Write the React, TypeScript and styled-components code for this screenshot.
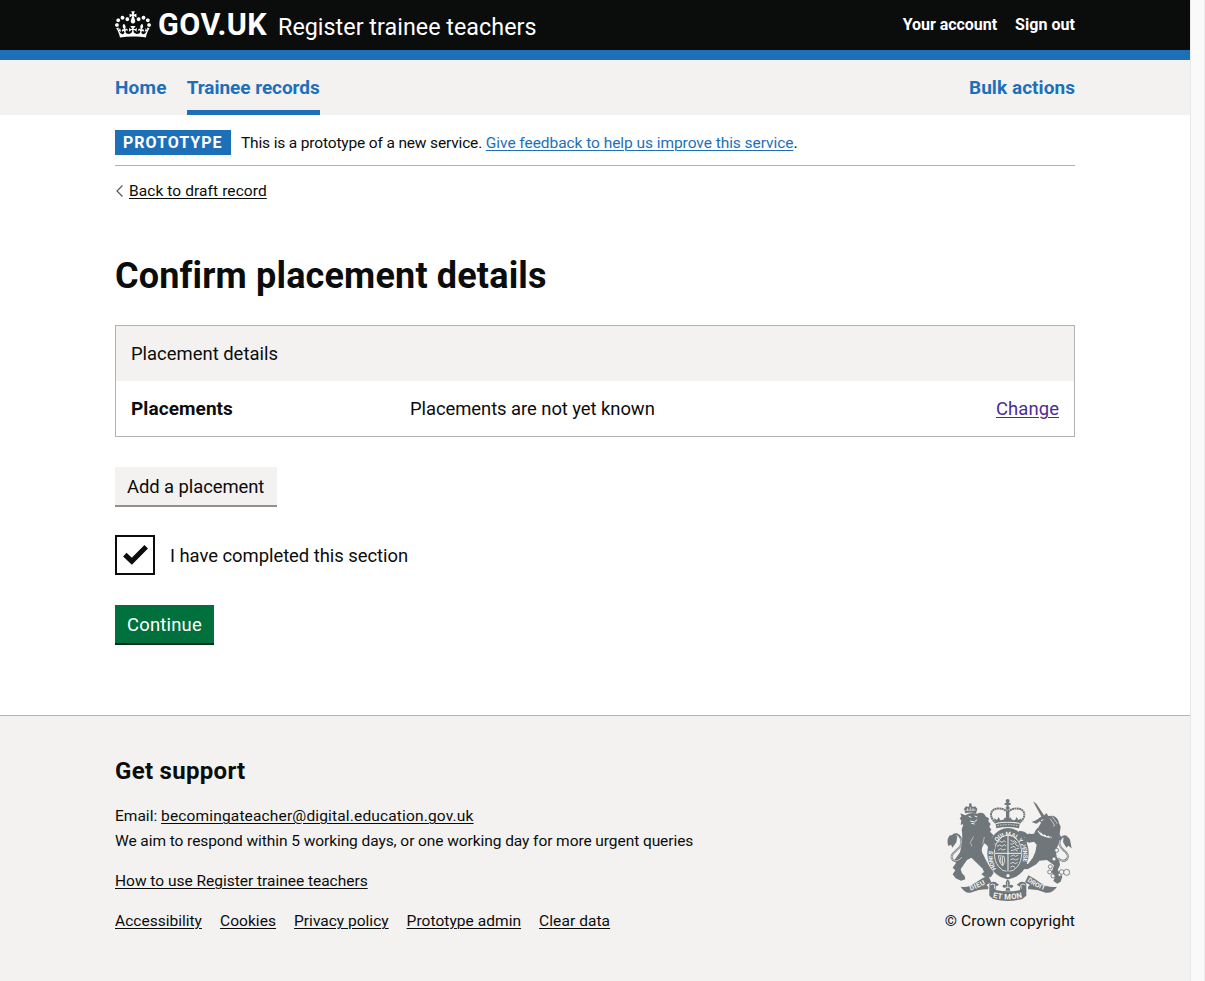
import React from 'react';
import styled, { createGlobalStyle, css } from 'styled-components';

const colours = {
  black: '#0b0c0c',
  white: '#ffffff',
  blue: '#1d70b8',
  lightGrey: '#f3f2f1',
  borderGrey: '#b1b4b6',
  midGrey: '#929191',
  darkGrey: '#505a5f',
  green: '#00703c',
  greenShadow: '#002d18',
  visited: '#4c2c92',
  arms: '#6f777b',
};

const GlobalStyle = createGlobalStyle`
  *, *::before, *::after { box-sizing: border-box; }
  body {
    margin: 0;
    background: ${colours.white};
    color: ${colours.black};
    font-family: Roboto, Arial, sans-serif;
    font-size: 16px;
    line-height: 25px;
    overflow: hidden;
  }
`;

const Window = styled.div`
  display: flex;
  height: 981px;
`;

const Page = styled.div`
  display: flex;
  flex-direction: column;
  width: 1190px;
`;

const ScrollTrack = styled.div`
  width: 15px;
  background: #fafafa;
  border-left: 1px solid #e8e8e8;
  border-right: 1px solid #ececec;
`;

const Container = styled.div`
  width: 960px;
  margin: 0 auto;
`;

const tracked = css<{ $track?: number }>`
  font-size: 0.97em;
  line-height: 1;
  letter-spacing: ${(p) => p.$track ?? 0}px;
  white-space: pre;
`;

const Tracked = styled.span<{ $track?: number }>`
  ${tracked}
`;

const Link = styled.a<{ $track?: number; $colour?: string }>`
  ${tracked}
  color: ${(p) => p.$colour ?? colours.black};
  text-decoration: underline;
  text-decoration-thickness: 1px;
  text-underline-offset: 1.5px;
`;

const Header = styled.header`
  height: 60px;
  background: ${colours.black};
  border-bottom: 10px solid ${colours.blue};
  color: ${colours.white};
`;

const HeaderRow = styled(Container)`
  display: flex;
  align-items: flex-start;
`;

const Crown = styled.svg`
  flex: none;
  width: 36px;
  height: 27px;
  margin-top: 11px;
`;

const Logotype = styled.span`
  margin-left: 7px;
  width: 113px;
  padding-top: 5px;
  font-size: 30.5px;
  line-height: 40px;
  font-weight: 700;
  letter-spacing: 0.45px;
`;

const ServiceName = styled.span`
  margin-left: 7px;
  padding-top: 7px;
  font-size: 24px;
  line-height: 40px;
`;

const HeaderLinks = styled.nav`
  display: flex;
  gap: 18px;
  margin-left: auto;
  padding-top: 12px;
`;

const HeaderLink = styled.a<{ $track: number }>`
  font-weight: 700;
  letter-spacing: ${(p) => p.$track}px;
`;

const PrimaryNav = styled.nav`
  height: 55px;
  background: ${colours.lightGrey};
`;

const NavRow = styled(Container)`
  display: flex;
  gap: 20px;
`;

const NavItem = styled.a<{ $current?: boolean; $end?: boolean; $track: number }>`
  height: 55px;
  color: ${colours.blue};
  font-size: 19px;
  line-height: 55px;
  font-weight: 700;
  letter-spacing: ${(p) => p.$track}px;
  box-shadow: ${(p) => (p.$current ? `inset 0 -5px ${colours.blue}` : 'none')};
  margin-left: ${(p) => (p.$end ? 'auto' : '0')};
`;

const PhaseBanner = styled.div`
  display: flex;
  gap: 10px;
  padding: 15px 0 10px;
  border-bottom: 1px solid ${colours.borderGrey};
`;

const Tag = styled.strong`
  width: 116px;
  padding-left: 8px;
  background: ${colours.blue};
  color: ${colours.white};
  font-weight: 700;
  letter-spacing: 1px;
`;

const BackLink = styled.div`
  display: flex;
  align-items: center;
  margin-top: 12px;
`;

const BackArrow = styled.svg`
  width: 14px;
  height: 13px;
`;

const Title = styled.h1`
  margin: 53px 0 29px;
  font-size: 36px;
  line-height: 40px;
  font-weight: 700;
  letter-spacing: 0.16px;
`;

const SummaryCard = styled.section`
  border: 1px solid ${colours.borderGrey};
  font-size: 19px;
  line-height: 55px;
`;

const CardHeading = styled.div`
  padding: 0 15px;
  background: ${colours.lightGrey};
`;

const SummaryRow = styled.div`
  display: grid;
  grid-template-columns: 279px 1fr auto;
  padding: 0 15px;
`;

const Key = styled.div`
  font-weight: 700;
  letter-spacing: 0.08px;
`;

const Button = styled.button<{ $primary?: boolean; $width: number }>`
  display: block;
  width: ${(p) => p.$width}px;
  height: 38px;
  padding: 1px 0 0 12px;
  border: 0;
  background: ${(p) => (p.$primary ? colours.green : colours.lightGrey)};
  box-shadow: 0 2px 0 ${(p) => (p.$primary ? colours.greenShadow : colours.midGrey)};
  color: ${(p) => (p.$primary ? colours.white : colours.black)};
  font-family: inherit;
  font-size: 19px;
  line-height: 37px;
  text-align: left;
  white-space: nowrap;
`;

const FormStack = styled.form`
  display: flex;
  flex-direction: column;
  gap: 30px;
  margin-top: 30px;
`;

const CheckboxRow = styled.label`
  display: flex;
  gap: 15px;
  height: 40px;
`;

const CheckboxBox = styled.span`
  width: 40px;
  height: 40px;
  border: 2px solid ${colours.black};
`;

const CheckboxText = styled.span`
  font-size: 19px;
  line-height: 42px;
`;

const Tick = styled.svg`
  display: block;
  width: 36px;
  height: 36px;
`;

const Footer = styled.footer`
  flex: 1;
  margin-top: 72px;
  padding-top: 40px;
  background: ${colours.lightGrey};
  border-top: 1px solid ${colours.borderGrey};
`;

const FooterRow = styled(Container)`
  display: flex;
  justify-content: space-between;
  align-items: flex-end;
`;

const SupportHeading = styled.h2`
  margin: 0 0 17px;
  font-size: 24px;
  line-height: 30px;
  font-weight: 700;
  letter-spacing: 0.3px;
`;

const Paragraph = styled.p`
  margin: 0 0 15px;
`;

const FooterLinks = styled.ul`
  display: flex;
  gap: 18px;
  margin: 0;
  padding: 0;
  list-style: none;
`;

const Copyright = styled.div`
  display: flex;
  flex-direction: column;
  align-items: flex-end;
`;

const Arms = styled.svg`
  width: 125px;
  height: 102px;
  margin: 0 3px 7px 0;
`;

const ScrollText = styled.text`
  fill: ${colours.lightGrey};
  font-weight: 700;
`;

function CoatOfArms() {
  return (
    <Arms viewBox="36 27 375 306" fill={colours.arms}>
      {/* imperial crown */}
      <circle cx="218" cy="33" r="6" />
      <path d="M215 36h6v12h-6zM209 39h18v6h-18z" />
      <circle cx="218" cy="54" r="6" />
      <path d="M183 99c-16-12-20-30-8-39 14-9 32-4 43 6 11-10 29-15 43-6 12 9 8 27-8 39" fill="none" stroke={colours.arms} strokeWidth="6" strokeDasharray="6 1.2" />
      <path d="M213 62h10v32h-10z" />
      <path d="M180 99l-3-14 9 5 5-9 5 10 9-2 5-7 8 9 8-9 5 7 9 2 5-10 5 9 9-5-3 14q-35-8-76 0z" />
      <path d="M182 102q36-8 72 0l-2 13q-34-8-68 0z" />
      <path d="M187 107q31-6 62 0" fill="none" stroke={colours.lightGrey} strokeWidth="2" strokeDasharray="5 3" />

      {/* garter and shield */}
      <ellipse cx="219" cy="190" rx="62" ry="76" />
      <ellipse cx="219" cy="190" rx="41" ry="55" fill="none" stroke={colours.lightGrey} strokeWidth="2.5" />
      <path d="M219 136v108M180 190h78" stroke={colours.lightGrey} strokeWidth="3" />
      <g fill="none" stroke={colours.lightGrey} strokeWidth="2.4">
        <path d="M187 158l7-5 7 4 6-5 5 4M186 169l8-4 7 4 7-5 6 4M190 180l7-4 6 4 9-3" />
        <path d="M226 150l8 5 5-3 7 8M226 162h8l5-5 5 9 8 3M227 173l10-4 7 8 9-3M228 182l12-3 8 4" />
        <path d="M190 197l17 2q7 14-4 29-12-10-13-31zM196 201l2 18M202 201l1 24" />
        <path d="M227 199l8-4 7 4 8-4M226 210l8-4 8 4 9-4M226 221l8-4 7 4 7-4M226 232l7-4 7 4" />
      </g>
      <path id="garterArc" d="M184 237a46 60 0 1 1 70 0" fill="none" />
      <ScrollText fontSize="18" letterSpacing="-0.6">
        <textPath href="#garterArc">HONI SOIT QUI MAL Y PENSE</textPath>
      </ScrollText>
      <circle cx="219" cy="256" r="12" />
      <circle cx="219" cy="257" r="5" fill={colours.lightGrey} />

      {/* lion */}
      <path d="M91 70l-4-14 6-7 7 2 6-8 7 8 7-2 7 7-4 15q-16-6-32-1z" />
      <circle cx="106" cy="44" r="4" />
      <path d="M92 61l30-1M98 54v9M106 51v10M114 54v9" stroke={colours.lightGrey} strokeWidth="2" />
      <path d="M91 76q16-11 35-5 12-6 21 0l6 9 9 5-2 9 7 8-4 8 6 9-4 6 10 10-5 10 8 12 3 15-6 14-12-6-7-14-8-6-5 9q-7 13 2 25l8 17q9 17 16 28l7 10-9 13-18-2-10-8 8-6-4-10-20-19-14-14-13 7-12 17-7 11 4 12 8 8 2 10-13 4-16-7-9-12 8-12-8-8 10-14-5-8 17-24 4-19q5-31 1-49l5-16-8 1 2-13-5-5 5-7-3-9z" />
      <path d="M101 79l8 3M119 78l8 3M106 93l12 3 8-7M109 100l10 2" fill="none" stroke={colours.lightGrey} strokeWidth="3" />
      <path d="M116 139l-10 18 5 12M148 141l-5 22" fill="none" stroke={colours.lightGrey} strokeWidth="1.5" />
      <path d="M81 202q-17 17-28 7-10-11 9-26 24-18 15-39-9-17-23-9" fill="none" stroke={colours.arms} strokeWidth="6" />
      <path d="M81 202q-17 17-28 7-10-11 9-26 24-18 15-39" fill="none" stroke={colours.lightGrey} strokeWidth="1.8" />
      <path d="M59 133l-16 4q-9 13-3 31l8-4 4 9 12-16 3-18z" />
      <path d="M145 237l20-3 10 10-12 6-15-4z" />

      {/* unicorn */}
      <path d="M294 34l10 7 28 42-9 4z" />
      <path d="M303 91l14-10 9-3 8-9 6 9 14-1q17 7 18 23l5 10-3 21 5 13-7 15-9 20q-1 24 10 33l2 13-7 15 14 20-5 15-10 6-12-8 5-12-10-15 7-20-21-16-23 2-9 11-25 14-18 1-8-7 9-10 17 1 14-18 8-18 4-22-8-9-15 3-13-6 1-11-13-3-8-10 5-6 14 3 10 8 19-2 5-10 9-10 7-13-3-4-11 7-14-5z" />
      <path d="M318 92l7-3" stroke={colours.lightGrey} strokeWidth="3" />
      <path d="M345 85l14 21-5 3M351 79l16 22" fill="none" stroke={colours.lightGrey} strokeWidth="2" />
      <path d="M310 122l9 11 15 6 16 3" fill="none" stroke={colours.lightGrey} strokeWidth="6" />
      <path d="M310 119l5 8 6-4 3 10 8-4 3 9 8-5 2 9 8-5" fill="none" stroke={colours.arms} strokeWidth="3" />
      <path d="M368 205q18 14 28 2 9-11-10-26-18-16-11-31 7-16 21-9" fill="none" stroke={colours.arms} strokeWidth="6" />
      <path d="M368 205q18 14 28 2 9-11-10-26-18-16-11-31" fill="none" stroke={colours.lightGrey} strokeWidth="1.8" />
      <path d="M386 140q13-3 19 9l5 26-10-8-6 6-10-17z" />
      <path d="M272 130l-6 13 7 14-6 6-9-8M281 132l17 8" fill="none" stroke={colours.arms} strokeWidth="5" />
      <g fill={colours.lightGrey} stroke={colours.arms} strokeWidth="2.6">
        <circle cx="365" cy="181" r="6" />
        <circle cx="357" cy="207" r="6" />
        <circle cx="346" cy="230" r="6" />
        <circle cx="344" cy="246" r="6" />
        <circle cx="354" cy="258" r="6" />
        <circle cx="374" cy="254" r="5" />
        <circle cx="380" cy="246" r="7" />
        <circle cx="395" cy="247" r="9" />
      </g>

      {/* motto scroll */}
      <path d="M77 290q23 4 42-10 22-15 40-24l10 21-15 8q9 5 5 13-24-1-53 10-16 3-29-18z" />
      <path d="M366 290q-27 4-48-10-20-15-38-24l-10 21 15 8q-9 5-5 13 25-1 52 10 20 3 34-18z" />
      <path d="M163 282q5-9 18-6l11 8-10 6v10q36 8 73 0v-10l-10-6 11-8q13-3 18 6v35l-12 10q-43 12-88 0l-11-10z" />
      <path d="M166 285q7-6 14 0l-2 11M271 285q-7-6-14 0l2 11" fill="none" stroke={colours.lightGrey} strokeWidth="2.5" />
      <path d="M218 268q-9 9-4 18-9-4-12 3 4 8 12 4l-3 9h15l-3-9q8 4 12-4-3-7-12-3 5-9-5-18z" />
      <path d="M218 275v20M209 292h18" stroke={colours.lightGrey} strokeWidth="2" />
      <path id="mottoLeft" d="M107 302q24-7 57-28" fill="none" />
      <path id="mottoMid" d="M171 322q47 13 98-1" fill="none" />
      <path id="mottoRight" d="M276 273q27 22 70 33" fill="none" />
      <ScrollText fontSize="21" letterSpacing="1.2">
        <textPath href="#mottoLeft">DIEU</textPath>
      </ScrollText>
      <ScrollText fontSize="23" letterSpacing="1">
        <textPath href="#mottoMid" startOffset="2">ET MON</textPath>
      </ScrollText>
      <ScrollText fontSize="20" letterSpacing="0.4">
        <textPath href="#mottoRight">DROIT</textPath>
      </ScrollText>
    </Arms>
  );
}

function CrownLogo() {
  return (
    <Crown viewBox="0 0 132 97" fill="currentColor" preserveAspectRatio="xMidYMid meet">
      <path d="M25 30.2c3.5 1.5 7.7-.2 9.1-3.7 1.5-3.6-.2-7.8-3.9-9.2-3.6-1.4-7.6.3-9.1 3.9-1.4 3.5.3 7.5 3.9 9zM9 39.5c3.6 1.5 7.8-.2 9.2-3.7 1.5-3.6-.2-7.8-3.9-9.1-3.6-1.5-7.6.2-9.1 3.8-1.4 3.5.3 7.5 3.8 9zM4.4 57.2c3.5 1.5 7.7-.2 9.1-3.8 1.5-3.6-.2-7.7-3.9-9.1-3.5-1.5-7.6.3-9.1 3.8-1.4 3.5.3 7.6 3.9 9.1zm38.3-21.4c3.5 1.5 7.7-.2 9.1-3.8 1.5-3.6-.2-7.7-3.9-9.1-3.6-1.5-7.6.3-9.1 3.8-1.3 3.6.4 7.7 3.9 9.1zm64.4-5.6c-3.6 1.5-7.8-.2-9.1-3.7-1.5-3.6.2-7.8 3.8-9.2 3.6-1.4 7.7.3 9.2 3.9 1.3 3.5-.4 7.5-3.9 9zm15.9 9.3c-3.6 1.5-7.7-.2-9.1-3.7-1.5-3.6.2-7.8 3.7-9.1 3.6-1.5 7.7.2 9.2 3.8 1.5 3.5-.3 7.5-3.8 9zm4.7 17.7c-3.6 1.5-7.8-.2-9.2-3.8-1.5-3.6.2-7.7 3.9-9.1 3.6-1.5 7.7.3 9.2 3.8 1.3 3.5-.4 7.6-3.9 9.1zM89.3 35.8c-3.6 1.5-7.8-.2-9.2-3.8-1.4-3.6.2-7.7 3.9-9.1 3.6-1.5 7.7.3 9.2 3.8 1.4 3.6-.3 7.7-3.9 9.1zM69.7 17.7l8.9 4.7V9.3l-8.9 2.8c-.2-.3-.5-.6-.9-.9L72.4 0H59.6l3.5 11.2c-.3.3-.6.5-.9.9l-8.8-2.8v13.1l8.8-4.7c.3.3.6.7.9.9l-5 15.4v.1c-.2.8-.4 1.6-.4 2.4 0 4.1 3.1 7.5 7 8.1h.2c.3 0 .7.1 1 .1.4 0 .7 0 1-.1h.2c4-.6 7.1-4.1 7.1-8.1 0-.8-.1-1.7-.4-2.4V34l-5.1-15.4c.4-.2.7-.6 1-.9zM66 92.8c16.9 0 32.8 1.1 47.1 3.2 4-16.9 8.9-26.7 14-33.5l-9.6-3.4c1 4.9 1.1 7.2 0 10.2-1.5-1.4-3-4.3-4.2-8.7L108.6 76c2.8-2 5-3.2 7.5-3.3-4.4 9.4-10 11.9-13.6 11.2-4.3-.8-6.3-4.6-5.6-7.9 1-4.7 5.7-5.9 8-.5 4.3-8.7-3-11.4-7.6-8.8 7.1-7.2 7.9-13.5 2.1-21.1-8 6.1-8.1 12.3-4.5 20.8-4.7-5.4-12.1-2.5-9.5 6.2 3.4-5.2 7.9-2 7.2 3.1-.6 4.3-6.4 7.8-13.5 7.2-10.3-.9-10.9-8-11.2-13.8 2.5-.5 7.1 1.8 11 7.3L80.2 60c-4.1 4.4-8 5.3-12.3 5.4 1.4-4.4 8-11.6 8-11.6H55.5s6.4 7.2 7.9 11.6c-4.2-.1-8-1-12.3-5.4l1.4 16.4c3.9-5.5 8.5-7.7 10.9-7.3-.3 5.8-.9 12.8-11.1 13.8-7.2.6-12.9-2.9-13.5-7.2-.7-5 3.8-8.3 7.1-3.1 2.7-8.7-4.6-11.6-9.4-6.2 3.7-8.5 3.6-14.7-4.6-20.8-5.8 7.6-5 13.9 2.2 21.1-4.7-2.6-11.9.1-7.7 8.8 2.3-5.5 7.1-4.2 8.1.5.7 3.3-1.3 7.1-5.7 7.9-3.5.7-9-1.8-13.5-11.2 2.5.1 4.7 1.3 7.5 3.3l-4.7-15.4c-1.2 4.4-2.7 7.2-4.3 8.7-1.1-3-.9-5.3 0-10.2l-9.5 3.4c5 6.9 9.9 16.7 14 33.5 14.8-2.1 30.8-3.2 47.7-3.2z" />
    </Crown>
  );
}

const footerLinks = [
  { label: 'Accessibility', track: 0.01 },
  { label: 'Cookies', track: 0.06 },
  { label: 'Privacy policy', track: 0 },
  { label: 'Prototype admin', track: 0.04 },
  { label: 'Clear data', track: 0.07 },
];

export default function App() {
  return (
    <Window>
      <GlobalStyle />
      <Page>
        <Header>
          <HeaderRow>
            <CrownLogo />
            <Logotype>GOV.UK</Logotype>
            <ServiceName>
              <Tracked $track={0.04}>Register trainee teachers</Tracked>
            </ServiceName>
            <HeaderLinks>
              <HeaderLink $track={-0.04}>Your account</HeaderLink>
              <HeaderLink $track={0.05}>Sign out</HeaderLink>
            </HeaderLinks>
          </HeaderRow>
        </Header>
        <PrimaryNav>
          <NavRow>
            <NavItem $track={0.2}>Home</NavItem>
            <NavItem $track={-0.05} $current>Trainee records</NavItem>
            <NavItem $track={0.06} $end>Bulk actions</NavItem>
          </NavRow>
        </PrimaryNav>
        <Container>
          <PhaseBanner>
            <Tag>PROTOTYPE</Tag>
            <div>
              <Tracked $track={-0.16}>This is a prototype of a new service. </Tracked>
              <Link $track={-0.06} $colour={colours.blue}>Give feedback to help us improve this service</Link>.
            </div>
          </PhaseBanner>
          <BackLink>
            <BackArrow viewBox="0 0 14 13" fill="none" stroke={colours.darkGrey} strokeWidth="1.2">
              <path d="M7.5 1.5L2 7L7.5 12.5" />
            </BackArrow>
            <div>
              <Link $track={0.08}>Back to draft record</Link>
            </div>
          </BackLink>
          <Title>Confirm placement details</Title>
          <SummaryCard>
            <CardHeading>
              <Tracked>Placement details</Tracked>
            </CardHeading>
            <SummaryRow>
              <Key>Placements</Key>
              <div>
                <Tracked $track={-0.06}>Placements are not yet known</Tracked>
              </div>
              <div>
                <Link $track={0.09} $colour={colours.visited}>Change</Link>
              </div>
            </SummaryRow>
          </SummaryCard>
          <FormStack>
            <Button type="button" $width={162}>
              <Tracked $track={-0.07}>Add a placement</Tracked>
            </Button>
            <CheckboxRow>
              <CheckboxBox>
                <Tick viewBox="0 0 36 36" fill="none" stroke={colours.black} strokeWidth="5">
                  <path d="M7.8 17.7L14.8 24.2L29.2 9.7" />
                </Tick>
              </CheckboxBox>
              <CheckboxText>
                <Tracked $track={-0.04}>I have completed this section</Tracked>
              </CheckboxText>
            </CheckboxRow>
            <Button type="button" $primary $width={99}>
              <Tracked $track={0.2}>Continue</Tracked>
            </Button>
          </FormStack>
        </Container>
        <Footer>
          <FooterRow>
            <div>
              <SupportHeading>Get support</SupportHeading>
              <Paragraph>
                <Tracked>Email: </Tracked>
                <Link $track={0.15}>becomingateacher@digital.education.gov.uk</Link>
                <br />
                <Tracked $track={-0.08}>
                  We aim to respond within 5 working days, or one working day for more urgent queries
                </Tracked>
              </Paragraph>
              <Paragraph>
                <Link $track={-0.02}>How to use Register trainee teachers</Link>
              </Paragraph>
              <FooterLinks>
                {footerLinks.map((link) => (
                  <li key={link.label}>
                    <Link $track={link.track}>{link.label}</Link>
                  </li>
                ))}
              </FooterLinks>
            </div>
            <Copyright>
              <CoatOfArms />
              <div>
                <Tracked $track={0.1}>© Crown copyright</Tracked>
              </div>
            </Copyright>
          </FooterRow>
        </Footer>
      </Page>
      <ScrollTrack />
    </Window>
  );
}
